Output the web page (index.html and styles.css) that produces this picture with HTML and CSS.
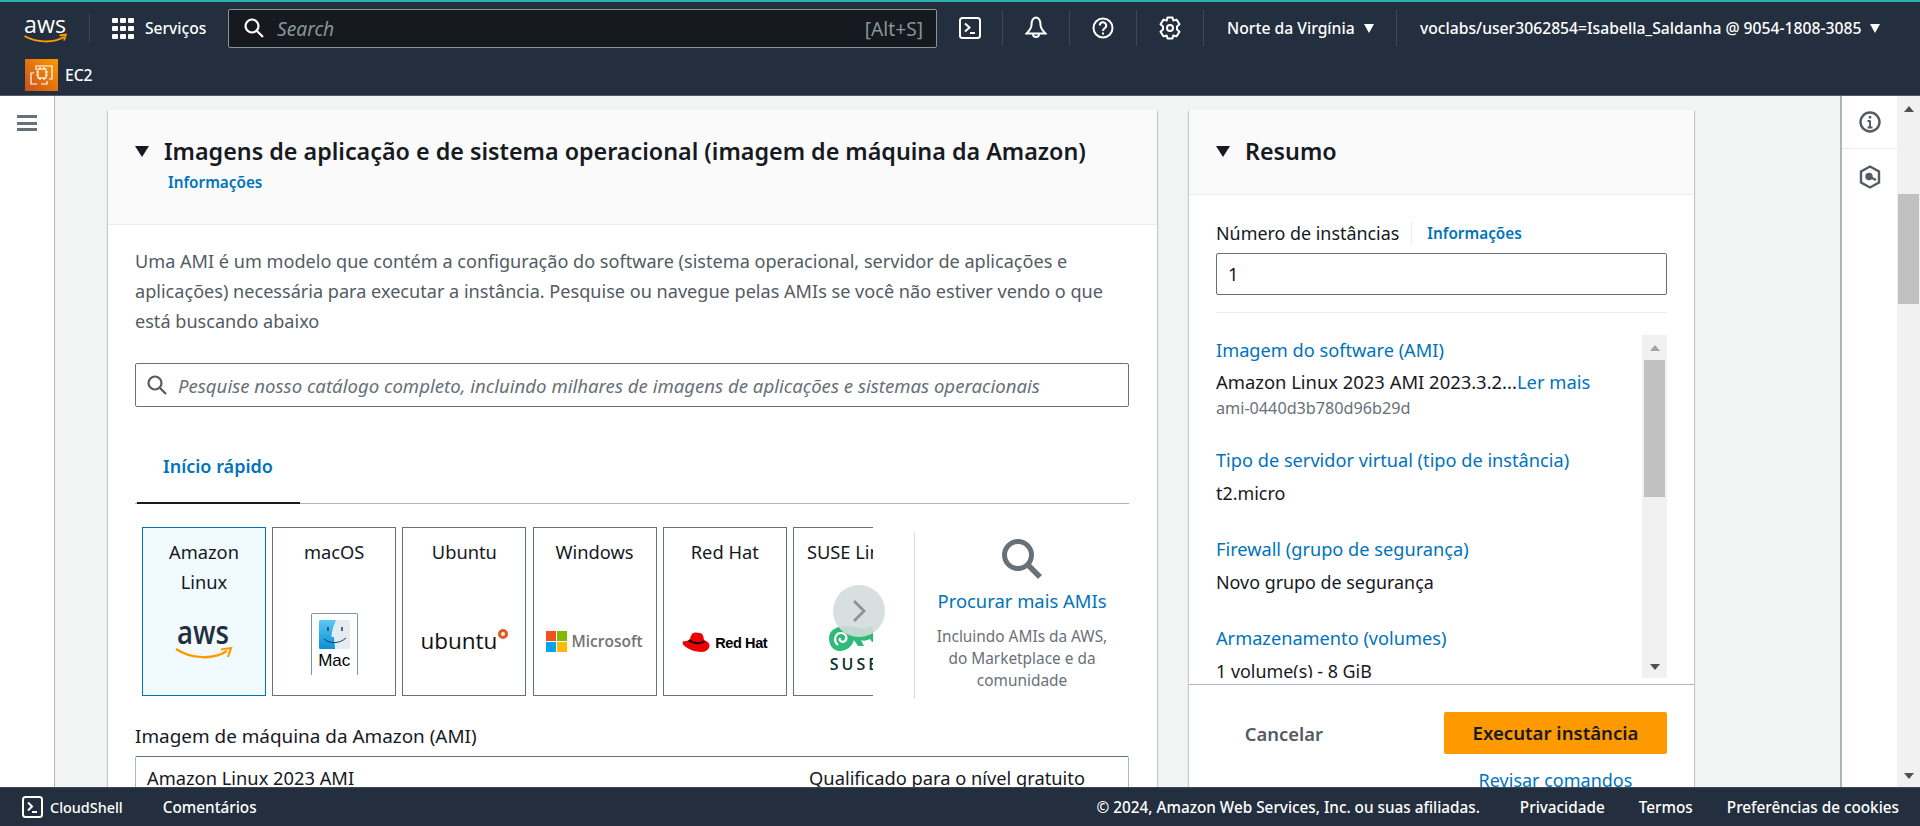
FILE: index.html
```html
<!DOCTYPE html>
<html lang="pt-BR">
<head>
    <meta charset="UTF-8">
    <title>Executar instância | EC2</title>
    <link rel="stylesheet" href="styles.css">
</head>
<body>
    <header class="top-nav">
        <div class="nav-row">
            <svg class="aws-logo" viewBox="0 0 43 28" width="43" height="28">
                <text x="0" y="17" class="aws-logo-text" textLength="42" lengthAdjust="spacingAndGlyphs">aws</text>
                <path d="M0.5 20 C12 27 30 27 40 21" fill="none" stroke="#ff9900" stroke-width="2"/>
                <path d="M35.500 19.500 L42 18.500 L40 24.500" fill="none" stroke="#ff9900" stroke-width="1.800"/>
            </svg>
            <span class="nav-sep sep-logo"></span>
            <svg class="grid-icon" viewBox="0 0 22 21" width="22" height="21" fill="#fff">
                <rect width="6" height="5" rx="1"/><rect x="8" width="6" height="5" rx="1"/><rect x="16" width="6" height="5" rx="1"/>
                <rect y="8" width="6" height="5" rx="1"/><rect x="8" y="8" width="6" height="5" rx="1"/><rect x="16" y="8" width="6" height="5" rx="1"/>
                <rect y="16" width="6" height="5" rx="1"/><rect x="8" y="16" width="6" height="5" rx="1"/><rect x="16" y="16" width="6" height="5" rx="1"/>
            </svg>
            <span class="nav-link services">Serviços</span>
            <div class="nav-search">
                <svg viewBox="0 0 20 20" width="20" height="20" fill="none" stroke="#fff" stroke-width="2.200">
                    <circle cx="8" cy="8" r="6.500"/><path d="M13 13 L19 19"/>
                </svg>
                <span class="nav-search-text">Search</span>
                <span class="nav-search-key">[Alt+S]</span>
            </div>
            <div class="nav-icon first-icon">
                <svg viewBox="0 0 22 22" width="22" height="22" fill="none" stroke="#fff" stroke-width="2">
                    <rect x="1" y="1" width="20" height="20" rx="2.500"/><path d="M6 6.500 L10.500 10.500 L6 14.500"/><path d="M11 16 H16"/>
                </svg>
            </div>
            <div class="nav-icon">
                <svg viewBox="0 0 22 24" width="22" height="24" fill="none" stroke="#fff" stroke-width="2">
                    <path d="M11 1.500 C7 2 6.500 6 6.500 9 C6.500 12 4 15 1.500 17.500 H20.500 C18 15 15.500 12 15.500 9 C15.500 6 15 2 11 1.500 Z"/><path d="M8 18 A3 3 0 0 0 14 18"/>
                </svg>
            </div>
            <div class="nav-icon">
                <svg viewBox="0 0 22 22" width="22" height="22" fill="none" stroke="#fff" stroke-width="2">
                    <circle cx="11" cy="11" r="9.500"/><path d="M7.800 8.500 A3.200 3.200 0 1 1 12.500 11.300 C11.300 12 11 12.600 11 14"/><path d="M11 15.500 V17.500"/>
                </svg>
            </div>
            <div class="nav-icon">
                <svg viewBox="0 0 22 24" width="22" height="24" fill="none" stroke="#fff" stroke-width="2" stroke-linejoin="round">
                    <path d="M8.500 1.500 H13.500 L14.300 4.600 L17.500 3.600 L20.500 8.300 L18 10.500 V13.500 L20.500 15.700 L17.500 20.400 L14.300 19.400 L13.500 22.500 H8.500 L7.700 19.400 L4.500 20.400 L1.500 15.700 L4 13.500 V10.500 L1.500 8.300 L4.500 3.600 L7.700 4.600 Z"/><circle cx="11" cy="12" r="3"/>
                </svg>
            </div>
            <div class="nav-menu region"><span>Norte da Virgínia</span><i class="caret-white"></i></div>
            <div class="nav-menu user"><span>voclabs/user3062854=Isabella_Saldanha @ 9054-1808-3085</span><i class="caret-white"></i></div>
        </div>
        <div class="nav-row-services">
            <svg class="ec2-icon" viewBox="0 0 33 32" width="33" height="32">
                <defs>
                    <linearGradient id="ec2Bg" x1="0" y1="1" x2="1" y2="0">
                        <stop offset="0" stop-color="#c8511b"/><stop offset="1" stop-color="#ff9900"/>
                    </linearGradient>
                </defs>
                <rect width="33" height="32" fill="url(#ec2Bg)"/>
                <g fill="none" stroke="#fff" stroke-width="1.200">
                    <path d="M12 25 H6 V14 H9"/><path d="M16 25 H22 V22"/>
                    <path d="M11 11 V7 H27 V20 H24"/>
                    <rect x="13" y="10" width="8" height="9"/>
                    <path d="M15 8 V10 M19 8 V10 M15 19 V21 M19 19 V21 M11 13 H13 M11 16 H13 M21 13 H23 M21 16 H23"/>
                </g>
            </svg>
            <span class="nav-link">EC2</span>
        </div>
    </header>

    <div class="app-body">
        <nav class="side-nav">
            <div class="hamburger"><span></span><span></span><span></span></div>
        </nav>

        <main class="content">
            <section class="card card-ami">
                <div class="card-header">
                    <h2 class="card-title"><i class="caret-dark"></i>Imagens de aplicação e de sistema operacional (imagem de máquina da Amazon)</h2>
                    <a class="info-link info-under">Informações</a>
                </div>
                <div class="card-body">
                    <p class="ami-desc">Uma AMI é um modelo que contém a configuração do software (sistema operacional, servidor de aplicações e aplicações) necessária para executar a instância. Pesquise ou navegue pelas AMIs se você não estiver vendo o que está buscando abaixo</p>
                    <div class="ami-search">
                        <svg viewBox="0 0 20 20" width="20" height="20" fill="none" stroke="#545b64" stroke-width="2.200">
                            <circle cx="8" cy="8" r="6.500"/><path d="M13 13 L19 19"/>
                        </svg>
                        <span>Pesquise nosso catálogo completo, incluindo milhares de imagens de aplicações e sistemas operacionais</span>
                    </div>
                    <div class="tabs"><span class="tab-active">Início rápido</span></div>

                    <div class="quick-start">
                        <div class="carousel-wrap">
                            <div class="carousel">
                                <div class="tile tile-selected">
                                    <div class="tile-name">Amazon Linux</div>
                                    <div class="tile-logo">
                                        <svg class="aws-tile-logo" viewBox="0 0 58 36" width="58" height="36">
                                            <text x="2" y="19" class="logo-aws" textLength="52" lengthAdjust="spacingAndGlyphs">aws</text>
                                            <path d="M1 24 C16 34 38 35 52 26" fill="none" stroke="#ff9900" stroke-width="2.500"/>
                                            <path d="M46 24.500 L56 23 L53 32" fill="none" stroke="#ff9900" stroke-width="2.200"/>
                                        </svg>
                                    </div>
                                </div>
                                <div class="tile">
                                    <div class="tile-name">macOS</div>
                                    <div class="tile-logo">
                                        <div class="mac-logo">
                                            <svg viewBox="0 0 31 29" width="31" height="29">
                                                <defs>
                                                    <linearGradient id="finderBlue" x1="0" y1="0" x2="0" y2="1">
                                                        <stop offset="0" stop-color="#5cc8f5"/><stop offset="1" stop-color="#0a8fd8"/>
                                                    </linearGradient>
                                                </defs>
                                                <rect width="31" height="29" rx="1.500" fill="#e4ebf1"/>
                                                <path d="M1.500 0 H17 C14 7 12.500 12 12.500 17 H15 L16 29 H1.500 A1.500 1.500 0 0 1 0 27.500 V1.500 A1.500 1.500 0 0 1 1.500 0 Z" fill="url(#finderBlue)"/>
                                                <path d="M9 7 V11 M23 7 V11" stroke="#1c3a57" stroke-width="1.500"/>
                                                <path d="M5 19 C11 24 20 24 27 18" fill="none" stroke="#1c3a57" stroke-width="1"/>
                                            </svg>
                                            <span>Mac</span>
                                        </div>
                                    </div>
                                </div>
                                <div class="tile">
                                    <div class="tile-name">Ubuntu</div>
                                    <div class="tile-logo">
                                        <div class="ubuntu-logo">ubuntu<i></i></div>
                                    </div>
                                </div>
                                <div class="tile">
                                    <div class="tile-name">Windows</div>
                                    <div class="tile-logo">
                                        <div class="ms-logo">
                                            <div class="ms-squares"><i class="ms-red"></i><i class="ms-green"></i><i class="ms-blue"></i><i class="ms-yellow"></i></div>
                                            <span>Microsoft</span>
                                        </div>
                                    </div>
                                </div>
                                <div class="tile">
                                    <div class="tile-name">Red Hat</div>
                                    <div class="tile-logo">
                                        <div class="rh-logo">
                                            <svg viewBox="0 0 28 21" width="28" height="21">
                                                <path d="M8 7 C9 2 11 0 14 0.500 C16 0.800 17 1 18 1 C20.500 1 21.500 4 22 8 C25 9 27.500 11 27.500 13.500 C27.500 17 24 20 20 20 C13 20 6 17 2.500 14 C0.500 12.500 0 10.500 1.500 9 C3 9.500 6 9 8 7 Z" fill="#e00"/>
                                                <path d="M8 7.500 C11 10 17 11.500 22 8.500 L22.800 10.500 C17 13.500 10 12 6 9 Z" fill="#111"/>
                                            </svg>
                                            <span>Red Hat</span>
                                        </div>
                                    </div>
                                </div>
                                <div class="tile">
                                    <div class="tile-name tile-nowrap">SUSE Linux</div>
                                    <div class="tile-logo">
                                        <div class="suse-logo">
                                            <svg viewBox="0 0 52 25" width="52" height="25">
                                                <path d="M0 12 C0 4 8 0 17 0 C25 0 31 2 36 3 L43 0 L44 4 L51 8 C51 11 49 12 46 12 L47 16 L43 16 L41 13 C37 15 34 15 32 14 L35 20 L29 20 L25 14 C23 21 17 25 11 25 C4 25 0 19 0 12 Z" fill="#30ba78"/>
                                                <path d="M9 19 C4 15 6 7 12 7 C17 7 19 12 16 15 C13 17 10 15 11 12" fill="none" stroke="#fff" stroke-width="2.200"/>
                                            </svg>
                                            <span>SUSE</span>
                                        </div>
                                    </div>
                                </div>
                            </div>
                            <div class="carousel-next">
                                <svg viewBox="0 0 14 24" width="14" height="24" fill="none" stroke="#879596" stroke-width="2.800"><path d="M2 2 L12 12 L2 22"/></svg>
                            </div>
                        </div>
                        <div class="browse">
                            <svg viewBox="0 0 42 42" width="42" height="42" fill="none" stroke="#687078" stroke-width="5">
                                <circle cx="17" cy="17" r="13.500"/><path d="M27 27 L39 39" stroke-width="5.500"/>
                            </svg>
                            <a class="browse-link">Procurar mais AMIs</a>
                            <p class="browse-desc">Incluindo AMIs da AWS, do Marketplace e da comunidade</p>
                        </div>
                    </div>

                    <div class="ami-label">Imagem de máquina da Amazon (AMI)</div>
                    <div class="ami-select">
                        <span>Amazon Linux 2023 AMI</span>
                        <span>Qualificado para o nível gratuito</span>
                    </div>
                </div>
            </section>

            <aside class="card card-summary">
                <div class="card-header summary-header">
                    <h2 class="card-title"><i class="caret-dark"></i>Resumo</h2>
                </div>
                <div class="card-body summary-body">
                    <div class="count-label"><span>Número de instâncias</span><a class="info-link">Informações</a></div>
                    <div class="count-input">1</div>
                    <div class="summary-sep"></div>
                    <div class="summary-scroll">
                        <div class="summary-list">
                            <a class="summary-key first-key">Imagem do software (AMI)</a>
                            <div class="summary-value summary-ami">Amazon Linux 2023 AMI 2023.3.2...<a class="read-more">Ler mais</a></div>
                            <div class="summary-id">ami-0440d3b780d96b29d</div>
                            <a class="summary-key">Tipo de servidor virtual (tipo de instância)</a>
                            <div class="summary-value">t2.micro</div>
                            <a class="summary-key">Firewall (grupo de segurança)</a>
                            <div class="summary-value">Novo grupo de segurança</div>
                            <a class="summary-key">Armazenamento (volumes)</a>
                            <div class="summary-value">1 volume(s) - 8 GiB</div>
                        </div>
                        <div class="inner-scrollbar">
                            <i class="arrow-up"></i>
                            <div class="inner-thumb"></div>
                            <i class="arrow-down"></i>
                        </div>
                    </div>
                </div>
                <div class="summary-actions">
                    <div class="action-row">
                        <span class="btn-cancel">Cancelar</span>
                        <span class="btn-run">Executar instância</span>
                    </div>
                    <a class="review-link">Revisar comandos</a>
                </div>
            </aside>
        </main>

        <aside class="tools">
            <div class="tools-cell">
                <svg viewBox="0 0 22 22" width="22" height="22" fill="none" stroke="#545b64" stroke-width="2.400">
                    <circle cx="11" cy="11" r="9.500"/><path d="M11 9.500 V16 M8.500 16.500 H13.500 M8.500 10 H11" stroke-width="2"/><path d="M11 5 V7.500" stroke-width="2.400"/>
                </svg>
            </div>
            <div class="tools-cell">
                <svg viewBox="0 0 22 24" width="22" height="24" fill="none" stroke="#545b64" stroke-width="2.400">
                    <path d="M11 1.500 L20 6.500 V17.500 L11 22.500 L2 17.500 V6.500 Z"/><circle cx="10" cy="11.500" r="2.500" fill="#545b64"/><path d="M11 12 L17 15"/>
                </svg>
            </div>
        </aside>

        <div class="page-scrollbar">
            <i class="arrow-up"></i>
            <div class="page-thumb"></div>
            <i class="arrow-down"></i>
        </div>
    </div>

    <footer class="footer">
        <svg viewBox="0 0 21 22" width="21" height="22" fill="none" stroke="#fff" stroke-width="2">
            <rect x="1" y="1" width="19" height="20" rx="2.500"/><path d="M6 6.500 L10 10.500 L6 14.500"/><path d="M10 16 H15"/>
        </svg>
        <span class="foot-shell">CloudShell</span>
        <span class="foot-feedback">Comentários</span>
        <span class="foot-copy">© 2024, Amazon Web Services, Inc. ou suas afiliadas.</span>
        <span class="foot-link foot-first">Privacidade</span>
        <span class="foot-link">Termos</span>
        <span class="foot-link">Preferências de cookies</span>
    </footer>
</body>
</html>
```

FILE: styles.css
```css
:root {
    --nav-bg: #232f3e;
    --page-bg: #f2f3f3;
    --text: #16191f;
    --text-muted: #687078;
    --text-body: #545b64;
    --link: #0073bb;
    --line: #eaeded;
    --line-strong: #aab7b8;
    --scroll-bg: #f1f1f1;
    --scroll-thumb: #c1c1c1;
}

* {
    box-sizing: border-box;
}

html, body {
    height: 100%;
}

body {
    margin: 0;
    display: flex;
    flex-direction: column;
    overflow: hidden;
    font-family: "Noto Sans", "Open Sans", sans-serif;
    font-size: 18.3px;
    color: var(--text);
    background-color: var(--page-bg);
}

p, h2 {
    margin: 0;
}

/* top navigation */
.top-nav {
    height: 96px;
    flex: none;
    background-color: var(--nav-bg);
    border-top: 2px solid #2eb0b0;
    border-bottom: 1px solid #545b64;
    color: #fff;
}

.nav-row {
    height: 52px;
    display: flex;
    align-items: center;
    padding-left: 24px;
}

.aws-logo {
    margin-top: 3px;
    flex: none;
}

.aws-logo-text {
    font-family: "Open Sans", sans-serif;
    font-size: 24px;
    fill: #fff;
}

.nav-sep {
    width: 1px;
    height: 30px;
    background-color: #414750;
}

.sep-logo {
    margin-left: 22px;
    margin-right: 22px;
}

.nav-link {
    font-size: 15.6px;
    font-weight: 500;
    color: #fff;
    white-space: nowrap;
}

.services {
    margin-left: 11px;
    width: 83px;
}

.nav-search {
    width: 709px;
    height: 39px;
    flex: none;
    display: flex;
    align-items: center;
    padding: 0 13px 0 15px;
    background-color: #16191f;
    border: 1px solid #879596;
    border-radius: 2px;
}

.nav-search-text {
    margin-left: 13px;
    font-style: italic;
    font-size: 19.2px;
    color: #879596;
}

.nav-search-key {
    margin-left: auto;
    font-size: 19.2px;
    color: #879596;
}

.nav-icon {
    width: 67px;
    height: 36px;
    flex: none;
    display: flex;
    align-items: center;
    justify-content: center;
    border-right: 1px solid #414750;
}

.first-icon {
    width: 66px;
}

.nav-menu {
    display: flex;
    align-items: center;
    height: 36px;
    font-size: 15.7px;
    font-weight: 500;
    white-space: nowrap;
}

.region {
    width: 193px;
    padding-left: 23px;
    border-right: 1px solid #414750;
}

.user {
    padding-left: 23px;
}

.caret-white {
    width: 0;
    height: 0;
    margin-left: 9px;
    border-left: 5px solid transparent;
    border-right: 5px solid transparent;
    border-top: 9px solid #fff;
}

.nav-row-services {
    height: 41px;
    display: flex;
    align-items: center;
    padding-left: 25px;
    gap: 7px;
}

/* body columns */
.app-body {
    flex: 1;
    min-height: 0;
    display: flex;
}

.side-nav {
    width: 55px;
    flex: none;
    background-color: #fff;
    border-right: 1px solid var(--line-strong);
    padding: 19px 0 0 17px;
}

.hamburger {
    width: 20px;
    display: flex;
    flex-direction: column;
    gap: 3.500px;
}

.hamburger span {
    height: 3px;
    background-color: var(--text-muted);
}

.content {
    flex: 1;
    min-width: 0;
    display: flex;
    gap: 32px;
    padding: 14px 0 0 53px;
    overflow: hidden;
}

.card {
    flex: none;
    background-color: #fff;
    box-shadow: 0 1px 1px 0 rgba(0, 28, 36, 0.3), 1px 1px 1px 0 rgba(0, 28, 36, 0.15), -1px 1px 1px 0 rgba(0, 28, 36, 0.15);
}

.card-ami {
    width: 1049px;
}

.card-summary {
    width: 505px;
}

.card-header {
    height: 115px;
    padding: 26px 27px 0;
    background-color: #fafafa;
    border-bottom: 1px solid var(--line);
}

.card-title {
    display: flex;
    align-items: center;
    font-size: 23.3px;
    line-height: 30px;
    font-weight: 600;
    white-space: nowrap;
}

.caret-dark {
    width: 0;
    height: 0;
    margin-right: 15px;
    border-left: 7px solid transparent;
    border-right: 7px solid transparent;
    border-top: 11px solid var(--text);
}

.info-link {
    font-size: 15.3px;
    font-weight: 600;
    color: var(--link);
}

.info-under {
    display: block;
    margin: 6px 0 0 33px;
}

.card-body {
    padding: 21px 28px 0 27px;
}

.ami-desc {
    line-height: 30px;
    font-size: 18.1px;
    color: var(--text-body);
}

.ami-search {
    height: 44px;
    margin-top: 27px;
    display: flex;
    align-items: center;
    gap: 11px;
    padding-left: 11px;
    border: 1px solid var(--text-muted);
    border-radius: 2px;
    font-style: italic;
    font-size: 18.6px;
    color: var(--text-muted);
    white-space: nowrap;
}

.tabs {
    margin-top: 47px;
    padding-left: 2px;
    border-bottom: 1px solid var(--line-strong);
    display: flex;
}

.tab-active {
    width: 163px;
    line-height: 24px;
    padding: 0 0 24px 26px;
    border-bottom: 2px solid var(--text);
    margin-bottom: -1px;
    font-size: 18px;
    font-weight: 600;
    color: var(--link);
}

.quick-start {
    display: flex;
    margin: 23px 0 0 7px;
}

.carousel-wrap {
    position: relative;
    width: 731px;
    flex: none;
}

.carousel {
    display: flex;
    gap: 6.2px;
    overflow: hidden;
}

.tile {
    width: 124px;
    height: 169px;
    flex: none;
    padding-top: 9px;
    background-color: #fff;
    border: 1px solid var(--text-muted);
    text-align: center;
}

.tile-selected {
    background-color: #f1faff;
    border-color: var(--link);
}

.tile-name {
    height: 64px;
    padding: 0 16px;
    line-height: 30px;
    color: var(--text);
}

.tile-nowrap {
    white-space: nowrap;
    text-align: left;
    padding: 0 0 0 13px;
}

.tile-logo {
    height: 80px;
    display: flex;
    align-items: center;
    justify-content: center;
}

.aws-tile-logo {
    margin-top: 4px;
}

.logo-aws {
    font-family: "Open Sans", sans-serif;
    font-weight: 600;
    font-size: 32px;
    fill: #232f3e;
}

.mac-logo {
    width: 47px;
    height: 62px;
    margin-top: 6px;
    padding-top: 6px;
    border: 1px solid #879596;
    border-bottom: 0;
    border-radius: 2px 2px 0 0;
    display: flex;
    flex-direction: column;
    align-items: center;
    font-family: "Liberation Sans", sans-serif;
    font-size: 17px;
    line-height: 24px;
    color: #000;
}

.ubuntu-logo {
    display: flex;
    align-items: flex-start;
    font-family: "Open Sans", sans-serif;
    font-size: 22.5px;
    line-height: 30px;
    color: #111;
}

.ubuntu-logo i {
    width: 10px;
    height: 10px;
    margin: 3px 0 0 1px;
    border-radius: 50%;
    border: 3px solid #e95420;
    background-color: #fff;
}

.ms-logo {
    display: flex;
    align-items: center;
    gap: 4px;
    font-family: "Open Sans", sans-serif;
    font-weight: 600;
    font-size: 15.5px;
    color: #737373;
}

.ms-squares {
    display: grid;
    grid-template-columns: 10px 10px;
    gap: 1px;
}

.ms-squares i {
    height: 10px;
}

.ms-red { background-color: #f25022; }
.ms-green { background-color: #7fba00; }
.ms-blue { background-color: #00a4ef; }
.ms-yellow { background-color: #ffb900; }

.rh-logo {
    display: flex;
    align-items: center;
    gap: 5px;
    margin-top: 3px;
    font-family: "Liberation Sans", sans-serif;
    font-weight: 700;
    font-size: 14.5px;
    letter-spacing: -0.4px;
    color: #000;
    white-space: nowrap;
}

.suse-logo {
    width: 52px;
    display: flex;
    flex-direction: column;
    font-family: "Open Sans", sans-serif;
    font-weight: 600;
    font-size: 16px;
    line-height: 22px;
    letter-spacing: 3px;
    color: #0c322c;
    margin-top: 18px;
}

.suse-logo span {
    margin-top: 2px;
}

.carousel-next {
    position: absolute;
    left: 691px;
    top: 58px;
    width: 52px;
    height: 52px;
    border-radius: 50%;
    background-color: rgba(213, 219, 219, 0.9);
    display: flex;
    align-items: center;
    justify-content: center;
}

.browse {
    width: 215px;
    height: 165px;
    margin: 6px 0 0 41px;
    flex: none;
    display: flex;
    flex-direction: column;
    align-items: center;
    border-left: 1px solid #d5dbdb;
    padding-top: 5px;
    text-align: center;
}

.browse-link {
    margin-top: 9px;
    line-height: 24px;
    font-size: 18.4px;
    color: var(--link);
    white-space: nowrap;
}

.browse-desc {
    margin-top: 13px;
    width: 180px;
    font-size: 15.4px;
    line-height: 22px;
    color: var(--text-muted);
}

.ami-label {
    margin-top: 26px;
    line-height: 24px;
    font-size: 18.9px;
    color: var(--text);
}

.ami-select {
    display: flex;
    justify-content: space-between;
    height: 60px;
    margin-top: 8px;
    padding: 9px 43px 0 11px;
    border: 1px solid var(--line-strong);
    border-top-color: var(--text-muted);
    border-radius: 2px;
    line-height: 24px;
}

/* summary panel */
.summary-header {
    height: 85px;
    padding-left: 27px;
}

.summary-body {
    padding: 26px 27px 6px 27px;
}

.count-label {
    display: flex;
    align-items: center;
    line-height: 24px;
    font-size: 17.9px;
}

.count-label .info-link {
    margin-left: 12px;
    padding-left: 15px;
    border-left: 1px solid var(--line);
}

.count-input {
    height: 42px;
    margin-top: 8px;
    padding-left: 11px;
    line-height: 40px;
    border: 1px solid var(--text-muted);
    border-radius: 2px;
}

.summary-sep {
    height: 1px;
    margin-top: 17px;
    background-color: var(--line);
}

.summary-scroll {
    display: flex;
    height: 343px;
    margin-top: 22px;
    overflow: hidden;
}

.summary-list {
    flex: 1;
    min-width: 0;
    padding-top: 3px;
}

.summary-key {
    display: block;
    margin-top: 32px;
    line-height: 24px;
    font-size: 18.2px;
    color: var(--link);
    white-space: nowrap;
}

.first-key {
    margin-top: 0;
}

.summary-value {
    margin-top: 9px;
    line-height: 24px;
    font-size: 17.9px;
    color: var(--text);
    white-space: nowrap;
}

.summary-ami {
    margin-top: 8px;
    font-size: 18.4px;
}

.read-more {
    color: var(--link);
}

.summary-id {
    margin: 4px 0 -2px;
    font-size: 16.2px;
    line-height: 20px;
    color: var(--text-muted);
}

.inner-scrollbar {
    width: 25px;
    flex: none;
    display: flex;
    flex-direction: column;
    align-items: center;
    background-color: var(--scroll-bg);
}

.inner-thumb {
    width: 21px;
    height: 137px;
    margin-top: 9px;
    background-color: var(--scroll-thumb);
}

.arrow-up, .arrow-down {
    width: 0;
    height: 0;
    border-left: 5px solid transparent;
    border-right: 5px solid transparent;
}

.arrow-up {
    margin-top: 10px;
    border-bottom: 6px solid #a3a3a3;
}

.arrow-down {
    margin-top: auto;
    margin-bottom: 8px;
    border-top: 6px solid #505050;
}

.summary-actions {
    border-top: 1px solid var(--line-strong);
    padding: 27px 27px 0 0;
    display: flex;
    flex-direction: column;
    align-items: flex-end;
}

.action-row {
    display: flex;
    align-items: center;
}

.btn-cancel {
    margin-right: 121px;
    font-size: 18.4px;
    font-weight: 600;
    color: var(--text-body);
}

.btn-run {
    width: 223px;
    height: 42px;
    line-height: 42px;
    text-align: center;
    background-color: #ff9900;
    border-radius: 2px;
    font-size: 18.6px;
    font-weight: 600;
    color: var(--text);
}

.review-link {
    width: 223px;
    margin-top: 14px;
    line-height: 24px;
    font-size: 18px;
    text-align: center;
    color: var(--link);
}

/* right tools rail and page scrollbar */
.tools {
    width: 57px;
    flex: none;
    background-color: #fff;
    border-left: 2px solid var(--line-strong);
}

.tools-cell {
    height: 53px;
    display: flex;
    align-items: center;
    justify-content: center;
    border-bottom: 1px solid var(--line);
}

.tools-cell + .tools-cell {
    height: 56px;
    border-bottom: 0;
}

.page-scrollbar {
    width: 23px;
    flex: none;
    display: flex;
    flex-direction: column;
    align-items: center;
    background-color: var(--scroll-bg);
}

.page-thumb {
    width: 21px;
    height: 110px;
    margin-top: 82px;
    background-color: var(--scroll-thumb);
}

.page-scrollbar .arrow-up {
    border-bottom-color: #505050;
}

/* footer */
.footer {
    height: 39px;
    flex: none;
    display: flex;
    align-items: center;
    padding: 0 21px 0 22px;
    background-color: var(--nav-bg);
    border-top: 1px solid #414750;
    color: #fff;
    font-size: 15.3px;
    font-weight: 500;
    white-space: nowrap;
}

.foot-shell {
    margin-left: 7px;
    font-size: 14.4px;
}

.foot-feedback {
    margin-left: 40px;
}

.foot-copy {
    margin-left: auto;
}

.foot-link {
    margin-left: 34px;
}

.foot-first {
    margin-left: 40px;
}
```
